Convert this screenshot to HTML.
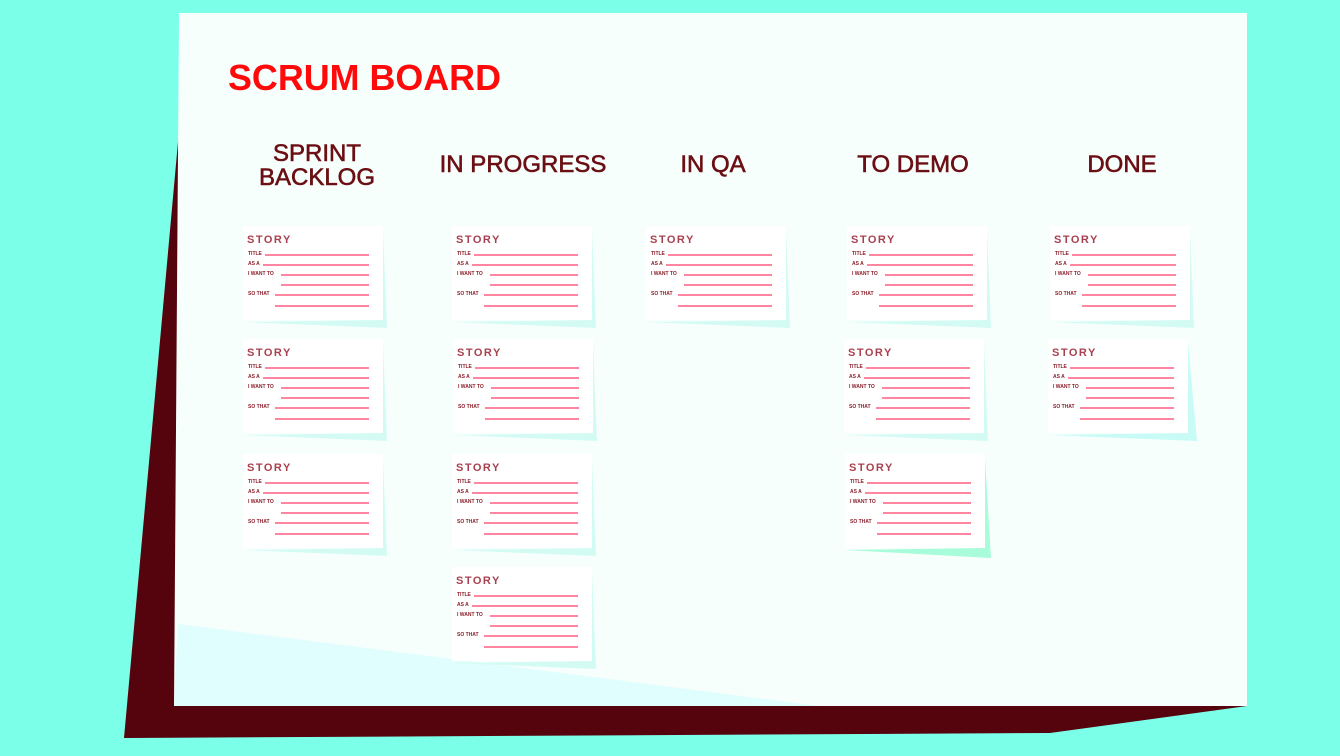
<!DOCTYPE html>
<html><head><style>
html,body{margin:0;padding:0;background:#7bffe9;}
svg{display:block}
.st{font-family:"Liberation Sans",sans-serif;font-weight:bold;font-size:11px;fill:#a8414f;letter-spacing:1.5px}
.lb{font-family:"Liberation Sans",sans-serif;font-weight:bold;font-size:5px;fill:#8a1f2a}
.ln{stroke:#ff5d80;stroke-width:1.6}
.hd{font-family:"Liberation Sans",sans-serif;font-size:24px;fill:#6b0f14;stroke:#6b0f14;stroke-width:0.6;text-anchor:middle}
</style></head><body>
<svg width="1340" height="756" viewBox="0 0 1340 756" xmlns="http://www.w3.org/2000/svg">
<defs>
<g id="card">
<polygon points="140,4 144,102 0,96 140,94" fill="#d3fbf4"/>
<rect x="0" y="0" width="140" height="94" fill="#ffffff"/>
</g>
<g id="lines">
<line class="ln" x1="22" y1="29" x2="126" y2="29"/>
<line class="ln" x1="20" y1="39" x2="126" y2="39"/>
<line class="ln" x1="38" y1="49" x2="126" y2="49"/>
<line class="ln" x1="38" y1="59" x2="126" y2="59"/>
<line class="ln" x1="32" y1="69" x2="126" y2="69"/>
<line class="ln" x1="32" y1="80" x2="126" y2="80"/>
</g>
</defs>
<rect width="1340" height="756" fill="#7bffe9"/>
<polygon points="180,120 124,738 1050,733 1247,706 179,706" fill="#55030d"/>
<polygon points="179,13 1247,13 1247,706 174,706" fill="#f7fffd"/>
<polygon points="178,624 820,706 174,706" fill="#e0fefd"/>
<text x="228" y="90" font-family="Liberation Sans,sans-serif" font-weight="bold" font-size="36" fill="#ff0a0a" textLength="273" lengthAdjust="spacingAndGlyphs">SCRUM BOARD</text>
<text class="hd" x="317" y="161">SPRINT</text>
<text class="hd" x="317" y="185">BACKLOG</text>
<text class="hd" x="523" y="172">IN PROGRESS</text>
<text class="hd" x="713" y="172">IN QA</text>
<text class="hd" x="913" y="172">TO DEMO</text>
<text class="hd" x="1122" y="172">DONE</text>

<g transform="translate(243,226)"><use href="#card"/><use href="#lines"/><text class="st" x="4" y="17">STORY</text><text class="lb" x="5" y="29">TITLE</text><text class="lb" x="5" y="39">AS A</text><text class="lb" x="5" y="49">I WANT TO</text><text class="lb" x="5" y="69">SO THAT</text></g>
<g transform="translate(243,339)"><use href="#card"/><use href="#lines"/><text class="st" x="4" y="17">STORY</text><text class="lb" x="5" y="29">TITLE</text><text class="lb" x="5" y="39">AS A</text><text class="lb" x="5" y="49">I WANT TO</text><text class="lb" x="5" y="69">SO THAT</text></g>
<g transform="translate(243,454)"><use href="#card"/><use href="#lines"/><text class="st" x="4" y="17">STORY</text><text class="lb" x="5" y="29">TITLE</text><text class="lb" x="5" y="39">AS A</text><text class="lb" x="5" y="49">I WANT TO</text><text class="lb" x="5" y="69">SO THAT</text></g>

<g transform="translate(452,226)"><use href="#card"/><use href="#lines"/><text class="st" x="4" y="17">STORY</text><text class="lb" x="5" y="29">TITLE</text><text class="lb" x="5" y="39">AS A</text><text class="lb" x="5" y="49">I WANT TO</text><text class="lb" x="5" y="69">SO THAT</text></g>
<g transform="translate(453,339)"><use href="#card"/><use href="#lines"/><text class="st" x="4" y="17">STORY</text><text class="lb" x="5" y="29">TITLE</text><text class="lb" x="5" y="39">AS A</text><text class="lb" x="5" y="49">I WANT TO</text><text class="lb" x="5" y="69">SO THAT</text></g>
<g transform="translate(452,454)"><use href="#card"/><use href="#lines"/><text class="st" x="4" y="17">STORY</text><text class="lb" x="5" y="29">TITLE</text><text class="lb" x="5" y="39">AS A</text><text class="lb" x="5" y="49">I WANT TO</text><text class="lb" x="5" y="69">SO THAT</text></g>
<g transform="translate(452,567)"><use href="#card"/><use href="#lines"/><text class="st" x="4" y="17">STORY</text><text class="lb" x="5" y="29">TITLE</text><text class="lb" x="5" y="39">AS A</text><text class="lb" x="5" y="49">I WANT TO</text><text class="lb" x="5" y="69">SO THAT</text></g>

<g transform="translate(646,226)"><use href="#card"/><use href="#lines"/><text class="st" x="4" y="17">STORY</text><text class="lb" x="5" y="29">TITLE</text><text class="lb" x="5" y="39">AS A</text><text class="lb" x="5" y="49">I WANT TO</text><text class="lb" x="5" y="69">SO THAT</text></g>

<g transform="translate(847,226)"><use href="#card"/><use href="#lines"/><text class="st" x="4" y="17">STORY</text><text class="lb" x="5" y="29">TITLE</text><text class="lb" x="5" y="39">AS A</text><text class="lb" x="5" y="49">I WANT TO</text><text class="lb" x="5" y="69">SO THAT</text></g>
<g transform="translate(844,339)"><use href="#card"/><use href="#lines"/><text class="st" x="4" y="17">STORY</text><text class="lb" x="5" y="29">TITLE</text><text class="lb" x="5" y="39">AS A</text><text class="lb" x="5" y="49">I WANT TO</text><text class="lb" x="5" y="69">SO THAT</text></g>
<g transform="translate(845,454)"><polygon points="140,4 146,104 0,96 140,94" fill="#a8fcd9"/><rect x="0" y="0" width="140" height="94" fill="#ffffff"/><use href="#lines"/><text class="st" x="4" y="17">STORY</text><text class="lb" x="5" y="29">TITLE</text><text class="lb" x="5" y="39">AS A</text><text class="lb" x="5" y="49">I WANT TO</text><text class="lb" x="5" y="69">SO THAT</text></g>

<g transform="translate(1050,226)"><use href="#card"/><use href="#lines"/><text class="st" x="4" y="17">STORY</text><text class="lb" x="5" y="29">TITLE</text><text class="lb" x="5" y="39">AS A</text><text class="lb" x="5" y="49">I WANT TO</text><text class="lb" x="5" y="69">SO THAT</text></g>
<g transform="translate(1048,339)"><polygon points="140,4 149,102 0,96 140,94" fill="#c8fbf6"/><rect x="0" y="0" width="140" height="94" fill="#ffffff"/><use href="#lines"/><text class="st" x="4" y="17">STORY</text><text class="lb" x="5" y="29">TITLE</text><text class="lb" x="5" y="39">AS A</text><text class="lb" x="5" y="49">I WANT TO</text><text class="lb" x="5" y="69">SO THAT</text></g>
</svg>
</body></html>
